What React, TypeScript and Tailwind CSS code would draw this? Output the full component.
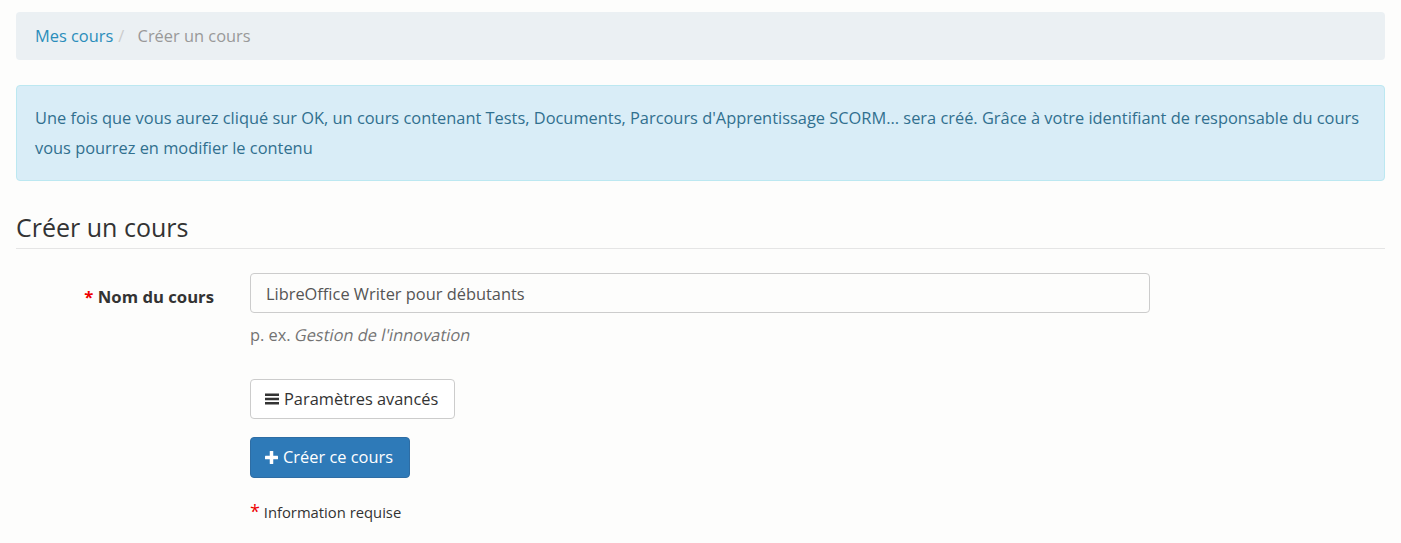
export default function App() {
  return (
    <div className="min-h-[543px] bg-[#fdfdfc] px-4 pt-3 font-['Open_Sans',sans-serif] text-[16.4px] text-[#333]">
      <nav className="flex items-center rounded bg-[#ebf0f3] px-[19px] py-3 leading-6">
        <a href="#" className="text-[#2a8dbb]">
          Mes cours
        </a>
        <span className="pl-[5px] pr-[9px] text-[#ccc]">/&nbsp;</span>
        <span className="text-[#999]">Créer un cours</span>
      </nav>

      <div className="mt-[25px] rounded border border-[#bce8f1] bg-[#d9edf7] px-[18px] py-[17px] leading-[30px] text-[#31708f]">
        Une fois que vous aurez cliqué sur OK, un cours contenant Tests, Documents, Parcours d'Apprentissage SCORM... sera
        créé. Grâce à votre identifiant de responsable du cours vous pourrez en modifier le contenu
      </div>

      <h2 className="mt-[29px] border-b border-[#e5e5e5] pb-[4px] text-[25px] leading-[34px] text-[#333]">
        Créer un cours
      </h2>

      <form className="mt-6 flex flex-col">
        <div className="flex items-start gap-9">
          <label className="w-[198px] shrink-0 pt-[12px] text-right text-[16.7px] font-bold leading-6">
            <span className="text-[#e00]">*</span> Nom du cours
          </label>
          <div className="flex flex-col">
            <input
              type="text"
              defaultValue="LibreOffice Writer pour débutants"
              className="h-10 w-[900px] rounded border border-[#ccc] bg-[#fdfdfc] px-[15px] text-[#555] outline-none"
            />
            <p className="mt-[10px] leading-6 text-[#737373]">
              p. ex. <span className="inline-block -skew-x-12">Gestion de l'innovation</span>
            </p>
          </div>
        </div>

        <div className="ml-[234px] mt-[32px] flex flex-col items-start">
          <button
            type="button"
            className="flex h-10 items-center gap-[5px] rounded border border-[#ccc] bg-white pl-[14px] pr-[16px] text-[#333]"
          >
            <svg width="14" height="12" viewBox="0 0 14 12" className="fill-[#333]">
              <rect x="0" y="0.5" width="14" height="2.5" />
              <rect x="0" y="4.75" width="14" height="2.5" />
              <rect x="0" y="9" width="14" height="2.5" />
            </svg>
            Paramètres avancés
          </button>

          <button
            type="button"
            className="mt-[18px] flex h-[41px] items-center gap-[5px] rounded border border-[#2e6da4] bg-[#2e7ab8] pl-[14px] pr-[16px] text-white"
          >
            <svg width="13" height="13" viewBox="0 0 13 13" className="fill-white">
              <rect x="4.75" y="0" width="3.5" height="13" rx="0.5" />
              <rect x="0" y="4.75" width="13" height="3.5" rx="0.5" />
            </svg>
            Créer ce cours
          </button>

          <p className="mt-[24px] text-[14.8px] leading-5">
            <span className="text-[18px] leading-none text-[#e00]">*</span> Information requise
          </p>
        </div>
      </form>
    </div>
  );
}
